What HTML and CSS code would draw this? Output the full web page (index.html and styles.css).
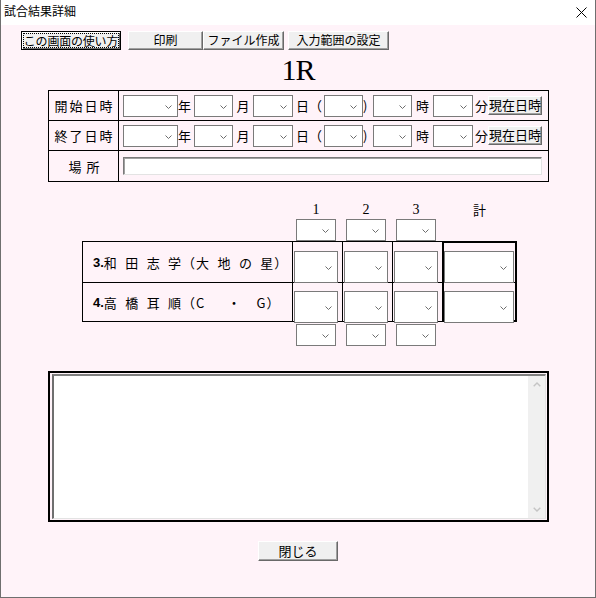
FILE: index.html
```html
<!DOCTYPE html>
<html lang="ja">
<head>
<meta charset="utf-8">
<title>試合結果詳細</title>
<link rel="stylesheet" href="styles.css">
</head>
<body>
<div class="window">
  <div class="titlebar">
    <span class="title">試合結果詳細</span>
    <svg class="close" viewBox="0 0 11 11"><path d="M.5 .5 10.5 10.5M10.5 .5 .5 10.5"/></svg>
  </div>
  <div class="content">
    <div class="toolbar">
      <button class="btn btn-help"><span class="focus-ring">この画面の使い方</span></button>
      <button class="btn btn-print">印刷</button>
      <button class="btn btn-file">ファイル作成</button>
      <button class="btn btn-range">入力範囲の設定</button>
    </div>

    <h1 class="round">1R</h1>

    <div class="dt">
      <div class="dt-row">
        <div class="dt-label">開始日時</div>
        <div class="dt-field">
          <div class="sel w55"><svg class="chev" viewBox="0 0 7 4"><path d="M.5 .5 3.5 3.5 6.5 .5"/></svg></div>
          <span class="u u-year">年</span>
          <div class="sel w39"><svg class="chev" viewBox="0 0 7 4"><path d="M.5 .5 3.5 3.5 6.5 .5"/></svg></div>
          <span class="u u-month">月</span>
          <div class="sel w40"><svg class="chev" viewBox="0 0 7 4"><path d="M.5 .5 3.5 3.5 6.5 .5"/></svg></div>
          <span class="u u-day">日（</span>
          <div class="sel w39"><svg class="chev" viewBox="0 0 7 4"><path d="M.5 .5 3.5 3.5 6.5 .5"/></svg></div>
          <span class="u u-paren">)</span>
          <div class="sel w39"><svg class="chev" viewBox="0 0 7 4"><path d="M.5 .5 3.5 3.5 6.5 .5"/></svg></div>
          <span class="u u-hour">時</span>
          <div class="sel w40"><svg class="chev" viewBox="0 0 7 4"><path d="M.5 .5 3.5 3.5 6.5 .5"/></svg></div>
          <span class="u u-min">分</span>
          <button class="btn btn-now">現在日時</button>
        </div>
      </div>
      <div class="dt-row">
        <div class="dt-label">終了日時</div>
        <div class="dt-field">
          <div class="sel w55"><svg class="chev" viewBox="0 0 7 4"><path d="M.5 .5 3.5 3.5 6.5 .5"/></svg></div>
          <span class="u u-year">年</span>
          <div class="sel w39"><svg class="chev" viewBox="0 0 7 4"><path d="M.5 .5 3.5 3.5 6.5 .5"/></svg></div>
          <span class="u u-month">月</span>
          <div class="sel w40"><svg class="chev" viewBox="0 0 7 4"><path d="M.5 .5 3.5 3.5 6.5 .5"/></svg></div>
          <span class="u u-day">日（</span>
          <div class="sel w39"><svg class="chev" viewBox="0 0 7 4"><path d="M.5 .5 3.5 3.5 6.5 .5"/></svg></div>
          <span class="u u-paren">)</span>
          <div class="sel w39"><svg class="chev" viewBox="0 0 7 4"><path d="M.5 .5 3.5 3.5 6.5 .5"/></svg></div>
          <span class="u u-hour">時</span>
          <div class="sel w40"><svg class="chev" viewBox="0 0 7 4"><path d="M.5 .5 3.5 3.5 6.5 .5"/></svg></div>
          <span class="u u-min">分</span>
          <button class="btn btn-now">現在日時</button>
        </div>
      </div>
      <div class="dt-row dt-last">
        <div class="dt-label dt-place">場 所</div>
        <div class="dt-field">
          <div class="place"></div>
        </div>
      </div>
    </div>

    <div class="score">
      <div class="sc-grid sc-head">
        <div></div>
        <div class="hd">1</div>
        <div class="hd">2</div>
        <div class="hd">3</div>
        <div class="hd hd-kanji">計</div>
      </div>
      <div class="sc-grid sc-sub">
        <div></div>
        <div class="sub"><div class="sel s40"><svg class="chev" viewBox="0 0 7 4"><path d="M.5 .5 3.5 3.5 6.5 .5"/></svg></div></div>
        <div class="sub"><div class="sel s40"><svg class="chev" viewBox="0 0 7 4"><path d="M.5 .5 3.5 3.5 6.5 .5"/></svg></div></div>
        <div class="sub"><div class="sel s40"><svg class="chev" viewBox="0 0 7 4"><path d="M.5 .5 3.5 3.5 6.5 .5"/></svg></div></div>
        <div></div>
      </div>
      <div class="sc-grid sc-table">
        <div class="cell name r1"><b class="no">3.</b>和 田 志 学（大 地 の 星）</div>
        <div class="cell pt r1"><div class="sel big"><svg class="chev" viewBox="0 0 7 4"><path d="M.5 .5 3.5 3.5 6.5 .5"/></svg></div></div>
        <div class="cell pt r1"><div class="sel big"><svg class="chev" viewBox="0 0 7 4"><path d="M.5 .5 3.5 3.5 6.5 .5"/></svg></div></div>
        <div class="cell pt r1"><div class="sel big"><svg class="chev" viewBox="0 0 7 4"><path d="M.5 .5 3.5 3.5 6.5 .5"/></svg></div></div>
        <div class="cell tot r1"><div class="sel big wide"><svg class="chev" viewBox="0 0 7 4"><path d="M.5 .5 3.5 3.5 6.5 .5"/></svg></div></div>

        <div class="cell name r2"><b class="no">4.</b>高 橋 耳 順（C   ・  G）</div>
        <div class="cell pt r2"><div class="sel big"><svg class="chev" viewBox="0 0 7 4"><path d="M.5 .5 3.5 3.5 6.5 .5"/></svg></div></div>
        <div class="cell pt r2"><div class="sel big"><svg class="chev" viewBox="0 0 7 4"><path d="M.5 .5 3.5 3.5 6.5 .5"/></svg></div></div>
        <div class="cell pt r2"><div class="sel big"><svg class="chev" viewBox="0 0 7 4"><path d="M.5 .5 3.5 3.5 6.5 .5"/></svg></div></div>
        <div class="cell tot r2"><div class="sel big wide"><svg class="chev" viewBox="0 0 7 4"><path d="M.5 .5 3.5 3.5 6.5 .5"/></svg></div></div>
      </div>
      <div class="sc-grid sc-sub sc-sub-bottom">
        <div></div>
        <div class="sub"><div class="sel s40"><svg class="chev" viewBox="0 0 7 4"><path d="M.5 .5 3.5 3.5 6.5 .5"/></svg></div></div>
        <div class="sub"><div class="sel s40"><svg class="chev" viewBox="0 0 7 4"><path d="M.5 .5 3.5 3.5 6.5 .5"/></svg></div></div>
        <div class="sub"><div class="sel s40"><svg class="chev" viewBox="0 0 7 4"><path d="M.5 .5 3.5 3.5 6.5 .5"/></svg></div></div>
        <div></div>
      </div>
    </div>

    <div class="notes-box">
      <div class="notes">
        <div class="notes-area"></div>
        <div class="scroll">
          <div class="arrow"><svg class="sarrow" viewBox="0 0 8 5"><path d="M.7 4.3 4 1 7.3 4.3"/></svg></div>
          <div class="arrow"><svg class="sarrow" viewBox="0 0 8 5"><path d="M.7 .7 4 4 7.3 .7"/></svg></div>
        </div>
      </div>
    </div>

    <button class="btn btn-close">閉じる</button>
  </div>
</div>
</body>
</html>
```

FILE: styles.css
```css
* {
  box-sizing: border-box;
}

html,
body {
  margin: 0;
  padding: 0;
}

body {
  width: 596px;
  height: 598px;
  overflow: hidden;
  background: #ffffff;
  font-family: "Noto Sans CJK JP", "Noto Sans", sans-serif;
  font-size: 13px;
  color: #000000;
}

.window {
  width: 596px;
  height: 598px;
  border: 1px solid #6f6f6f;
  border-top: 0;
  display: flex;
  flex-direction: column;
  background: #fff3f9;
}

/* ---------- title bar ---------- */
.titlebar {
  height: 25px;
  flex: none;
  background: #ffffff;
  display: flex;
  align-items: center;
  justify-content: space-between;
  padding: 0 8px 0 3px;
}

.title {
  font-size: 12px;
  line-height: 14px;
  margin-bottom: 3px;
}

.close {
  width: 11px;
  height: 11px;
  fill: none;
  stroke: #000000;
  stroke-width: 1;
}

/* ---------- content ---------- */
.content {
  flex: 1;
  display: flex;
  flex-direction: column;
}

.toolbar {
  display: flex;
  padding: 6px 0 0 20px;
}

.btn {
  font-family: "Noto Sans CJK JP", "Noto Sans", sans-serif;
  font-size: 12px;
  line-height: 14px;
  height: 19px;
  padding: 0 0 1px;
  color: #000000;
  background: #f0f0f0;
  border: 1px solid;
  border-color: #ffffff #696969 #696969 #ffffff;
  box-shadow: inset -1px -1px 0 #a0a0a0;
  flex: none;
  display: flex;
  align-items: center;
  justify-content: center;
  white-space: nowrap;
}

.btn-help {
  width: 100px;
  border-color: #000000;
  box-shadow: inset 1px 1px 0 #ffffff, inset -1px -1px 0 #696969;
  padding: 1px;
  align-items: stretch;
}

.focus-ring {
  flex: 1;
  display: flex;
  align-items: center;
  justify-content: center;
  border: 1px dotted #000000;
  letter-spacing: -0.2px;
  white-space: nowrap;
}

.btn-print {
  width: 75px;
  margin-left: 7px;
}

.btn-file {
  width: 81px;
}

.btn-range {
  width: 101px;
  margin-left: 4px;
}

.round {
  margin: 5px 0;
  height: 30px;
  font-family: "Liberation Serif", serif;
  font-size: 30px;
  line-height: 30px;
  font-weight: normal;
  text-align: center;
  letter-spacing: -1px;
}

/* ---------- date table ---------- */
.dt {
  margin-left: 47px;
  width: 501px;
  border: 1px solid #000000;
}

.dt-row {
  display: flex;
  height: 30px;
  border-bottom: 1px solid #000000;
}

.dt-last {
  border-bottom: 0;
}

.dt-label {
  width: 70px;
  flex: none;
  border-right: 1px solid #000000;
  display: flex;
  align-items: center;
  justify-content: center;
  letter-spacing: 2px;
  padding-left: 2px;
}

.dt-place {
  letter-spacing: 1px;
}

.dt-field {
  flex: 1;
  display: flex;
  align-items: center;
  padding-left: 4px;
}

.sel {
  flex: none;
  height: 22px;
  border: 1px solid #7a7a7a;
  background: #ffffff;
  display: flex;
  align-items: center;
  justify-content: flex-end;
  padding-right: 5px;
}

.chev {
  width: 7px;
  height: 4px;
  margin-top: 2px;
  fill: none;
  stroke: #6d6d6d;
  stroke-width: 1;
}

.w55 { width: 55px; }
.w39 { width: 39px; }
.w40 { width: 40px; }

.u {
  flex: none;
  line-height: 16px;
  white-space: nowrap;
}

.u-year { width: 16px; }
.u-month { width: 20px; text-align: center; }
.u-day { width: 31px; padding-left: 3px; }
.u-paren { width: 10px; }
.u-hour { width: 21px; text-align: center; }
.u-min { width: 15px; padding-left: 2px; }

.btn-now {
  width: 54px;
  font-size: 13px;
}

.place {
  width: 419px;
  height: 18px;
  background: #ffffff;
  border: 1px solid;
  border-color: #7a7a7a #e3e3e3 #e3e3e3 #7a7a7a;
  box-shadow: inset 1px 1px 0 #a0a0a0;
}

/* ---------- score ---------- */
.score {
  margin: 19px 0 0 81px;
}

.sc-grid {
  display: grid;
  grid-template-columns: 210px 50px 50px 50px 75px;
}

.sc-head {
  height: 18px;
}

.hd {
  font-family: "Liberation Serif", serif;
  font-size: 14px;
  line-height: 18px;
  text-align: center;
  padding: 0 6px 0 4px;
}

.hd-kanji {
  font-family: "Noto Sans CJK JP", sans-serif;
  font-size: 13px;
  padding: 0;
}

.sc-sub {
  height: 22px;
}

.sub .s40 {
  width: 40px;
  margin-left: 4px;
  padding-right: 6px;
}

.sc-sub-bottom {
  margin-top: 2px;
}

.sc-table {
  grid-template-rows: 41px 40px;
}

.cell {
  border-top: 1px solid #000000;
  border-left: 1px solid #000000;
  display: flex;
  align-items: flex-start;
}

.cell.r2 {
  border-bottom: 1px solid #000000;
}

.name {
  align-items: center;
  padding-left: 10px;
  letter-spacing: 1px;
  word-spacing: 3.5px;
  white-space: pre;
}

.no {
  font-family: "Liberation Sans", Arial, sans-serif;
  font-weight: bold;
  letter-spacing: 0;
}

.tot {
  border-left: 2px solid #000000;
  border-right: 2px solid #000000;
}

.tot.r1 {
  border-top: 2px solid #000000;
}

.tot.r2 {
  border-bottom: 2px solid #000000;
}

.sel.big {
  width: 44px;
  height: 32px;
  margin: 9px 0 0 1px;
  z-index: 1;
}

.r2 .sel.big {
  margin-top: 8px;
}

.tot .sel.big {
  margin-top: 8px;
  margin-left: 0;
}

.sel.wide {
  width: 70px;
  padding-right: 6px;
}

/* ---------- notes ---------- */
.notes-box {
  margin: 25px 0 0 47px;
  width: 501px;
  height: 151px;
  border: 2px solid #000000;
  padding: 1px 1px 1px 2px;
}

.notes {
  height: 100%;
  display: flex;
  background: #ffffff;
  border-style: solid;
  border-width: 2px 1px 1px 2px;
  border-color: #808080 #e3e3e3 #e3e3e3 #6f6f6f;
}

.notes-area {
  flex: 1;
}

.scroll {
  width: 17px;
  flex: none;
  background: #f0f0f0;
  display: flex;
  flex-direction: column;
  justify-content: space-between;
}

.arrow {
  height: 17px;
  display: flex;
  align-items: center;
  justify-content: center;
}

.sarrow {
  width: 8px;
  height: 5px;
  fill: none;
  stroke: #c4c4c4;
  stroke-width: 1.4;
}

.btn-close {
  width: 80px;
  height: 20px;
  margin: 19px auto 0;
  font-size: 13px;
}
```
